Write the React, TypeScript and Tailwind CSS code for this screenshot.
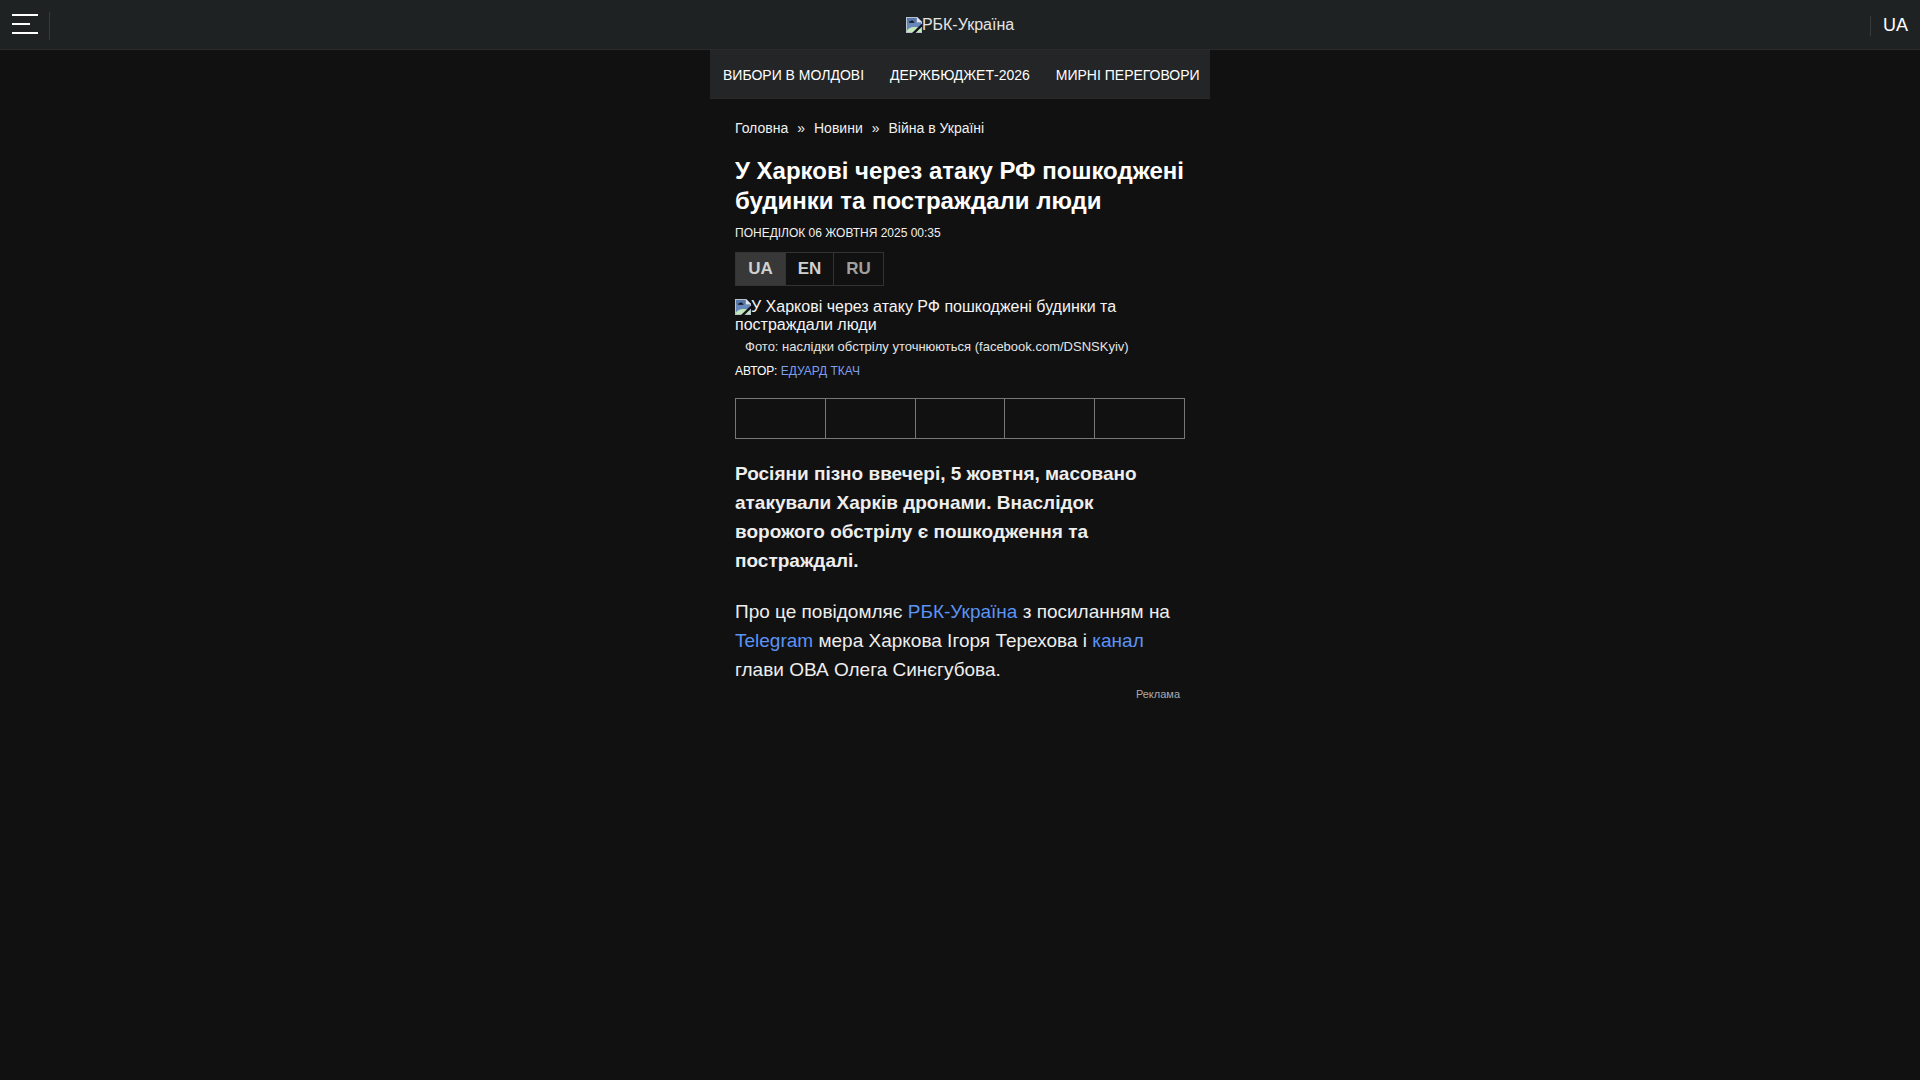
const topics = ['ВИБОРИ В МОЛДОВІ', 'ДЕРЖБЮДЖЕТ-2026', 'МИРНІ ПЕРЕГОВОРИ'];
const crumbs = ['Головна', 'Новини', 'Війна в Україні'];
const shareTargets = ['Facebook', 'Twitter', 'Telegram', 'Viber', 'WhatsApp'];

const languages = [
  { code: 'UA', style: 'w-[50px] bg-[#383838] text-[#d0d0d0]' },
  { code: 'EN', style: 'w-12 text-[#d0d0d0]' },
  { code: 'RU', style: 'w-[49px] text-[#a0a0a0]' },
];

// Placeholder for a picture that has not loaded
function MissingPicture() {
  return (
    <svg className="inline-block h-4 w-4 align-text-bottom" viewBox="0 0 16 16" aria-hidden="true">
      <path d="M0 0h11l5 5v11H0z" fill="#b9c3d0" />
      <path d="M1 1h9.500v4.500H15V15H1z" fill="#6787bb" />
      <path d="M1 1h9.500v4.500H1z" fill="#5878aa" />
      <path d="M11 0l5 5h-5z" fill="#dfe4ea" />
      <path d="M3 5.600c0-1 .8-1.500 1.600-1.400C5 3.200 7 3.200 7.300 4.400c.9 0 1.200.6 1.200 1.300H3z" fill="#10151c" />
      <path d="M1 15v-1.500C3.500 9.800 8 8.800 15 11.500V15z" fill="#c4e8bc" />
      <path d="M16 6.500v3L9.500 16H6z" fill="#111416" />
    </svg>
  );
}

function Header() {
  return (
    <header className="flex h-[50px] items-center justify-between border-b border-[#2a2a2a] bg-[#1f2223] px-3">
      <div className="flex flex-1 items-center">
        <button type="button" aria-label="Меню" className="flex w-[26px] flex-col gap-[7px] pb-0.5">
          <span className="h-0.5 w-full bg-white" />
          <span className="h-0.5 w-[18px] bg-white" />
          <span className="h-0.5 w-full bg-white" />
        </button>
        <span className="mt-0.5 ml-[11px] h-7 w-px bg-[#383a3b]" />
      </div>
      <a href="#" className="text-base leading-[18px] text-[#e4e4e4]">
        <MissingPicture />
        РБК-Україна
      </a>
      <div className="flex flex-1 items-center justify-end">
        <span className="mt-0.5 mr-3 h-5 w-px bg-[#383a3b]" />
        <button type="button" className="text-lg">UA</button>
      </div>
    </header>
  );
}

export default function App() {
  return (
    <div className="min-h-screen bg-[#111111] font-['Liberation_Sans',Arial,sans-serif] text-white">
      <Header />

      <div className="mx-auto max-w-[500px]">
        <nav className="flex h-[49px] items-center gap-[26px] overflow-hidden border-b border-[#2a2a2a] bg-[#232527] px-[13px] pt-0.5 text-sm whitespace-nowrap">
          {topics.map((topic) => (
            <a key={topic} href="#">{topic}</a>
          ))}
        </nav>

        <main className="px-[25px] pt-[19px]">
          <ol className="flex text-sm text-[#f0f0f0]">
            {crumbs.map((crumb, i) => (
              <li key={crumb}>
                {i > 0 && <span className="px-[9px]">»</span>}
                <a href="#">{crumb}</a>
              </li>
            ))}
          </ol>

          <h1 className="mt-[18px] text-2xl leading-[30px] font-bold">
            У Харкові через атаку РФ пошкоджені будинки та постраждали люди
          </h1>
          <time dateTime="2025-10-06T00:35" className="mt-[9px] block text-xs text-[#f0f0f0]">
            ПОНЕДІЛОК 06 ЖОВТНЯ 2025 00:35
          </time>

          <div className="mt-[11px] flex w-fit divide-x divide-[#333333] border border-[#333333] text-[17px] font-bold">
            {languages.map((lang) => (
              <a key={lang.code} href="#" className={`flex h-8 items-center justify-center ${lang.style}`}>
                {lang.code}
              </a>
            ))}
          </div>

          <figure className="mt-3">
            <p className="text-base leading-[18px] text-[#f4f4f4]">
              <MissingPicture />
              У Харкові через атаку РФ пошкоджені будинки та постраждали люди
            </p>
            <figcaption className="mt-1 px-2.5 text-[13px] leading-[18px] text-[#e4e4e4]">
              Фото: наслідки обстрілу уточнюються (facebook.com/DSNSKyiv)
            </figcaption>
          </figure>

          <p className="mt-[7px] text-xs">
            АВТОР: <a href="#" className="text-[#7e9ff0]">ЕДУАРД ТКАЧ</a>
          </p>

          <div className="mt-[19px] flex h-[41px] divide-x divide-[#777777] border border-[#777777]">
            {shareTargets.map((target) => (
              <button key={target} type="button" aria-label={target} className="flex-1" />
            ))}
          </div>

          <article className="mt-5 space-y-[22px] text-[19px] leading-[29px] text-[#eeeeee]">
            <p className="font-bold">
              Росіяни пізно ввечері, 5 жовтня, масовано атакували Харків дронами. Внаслідок ворожого обстрілу є
              пошкодження та постраждалі.
            </p>
            <p>
              Про це повідомляє <a href="#" className="text-[#5c93f5]">РБК-Україна</a> з посиланням на{' '}
              <a href="#" className="text-[#5c93f5]">Telegram</a> мера Харкова Ігоря Терехова і{' '}
              <a href="#" className="text-[#5c93f5]">канал</a> глави ОВА Олега Синєгубова.
            </p>
          </article>
          <p className="mt-0.5 pr-[5px] text-right text-[11px] text-[#aaaaaa]">Реклама</p>
        </main>
      </div>
    </div>
  );
}
